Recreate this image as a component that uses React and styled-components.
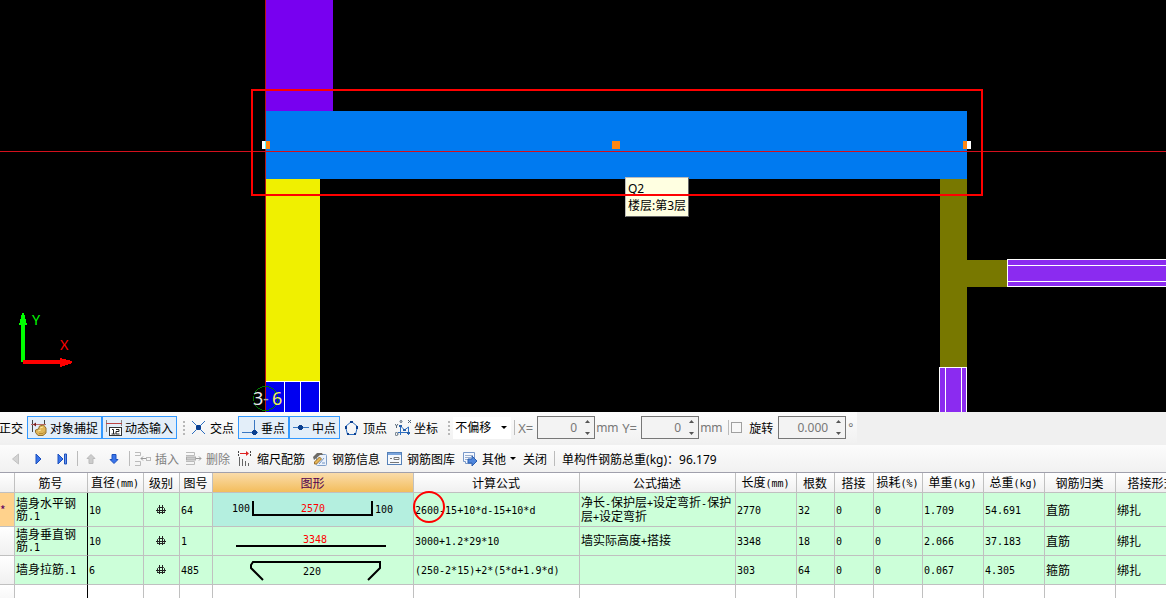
import { useState } from "react";
import styled, { createGlobalStyle } from "styled-components";

const columns = [
    { name: "", width: 15 },
    { name: "筋号", width: 73 },
    { name: "直径(mm)", width: 56 },
    { name: "级别", width: 36 },
    { name: "图号", width: 33 },
    { name: "图形", width: 201, active: true },
    { name: "计算公式", width: 166 },
    { name: "公式描述", width: 156 },
    { name: "长度(mm)", width: 61 },
    { name: "根数", width: 38 },
    { name: "搭接", width: 39 },
    { name: "损耗(%)", width: 49 },
    { name: "单重(kg)", width: 61 },
    { name: "总重(kg)", width: 61 },
    { name: "钢筋归类", width: 71 },
    { name: "搭接形式", width: 73 },
];

const bars = [
    {
        name: "墙身水平钢筋.1", diameter: "10", code: "64", shape: "u",
        formula: "2600-15+10*d-15+10*d", description: "净长-保护层+设定弯折-保护层+设定弯折",
        values: ["2770", "32", "0", "0", "1.709", "54.691", "直筋", "绑扎"],
    },
    {
        name: "墙身垂直钢筋.1", diameter: "10", code: "1", shape: "line",
        formula: "3000+1.2*29*10", description: "墙实际高度+搭接",
        values: ["3348", "18", "0", "0", "2.066", "37.183", "直筋", "绑扎"],
    },
    {
        name: "墙身拉筋.1", diameter: "6", code: "485", shape: "tie",
        formula: "(250-2*15)+2*(5*d+1.9*d)", description: "",
        values: ["303", "64", "0", "0", "0.067", "4.305", "箍筋", "绑扎"],
    },
];

// latin runs are set in a half-width font next to the full-width characters
function Mixed({ text }) {
    return text.split(/([\x21-\x7e]+)/).filter(Boolean).map((part, i) => (
        /^[\x21-\x7e]/.test(part) ? <Half key={i}>{part}</Half> : part
    ));
}

function Icon({ size = 16, children }) {
    return (
        <svg width={size} height={size} viewBox={`0 0 ${size} ${size}`} fill="none" aria-hidden="true">
            {children}
        </svg>
    );
}

function SnapIcon() {
    return (
        <Icon>
            <path d="M1.500 0v12M13.500 0v5" stroke="#444" />
            <path d="M0 4.500h15" stroke="#b86a6a" />
            <path d="M5 2.500v4L2 4.500z" fill="#7d2020" />
            <path d="M4.500 10l3-1 1-3 4-1 2.500 3v5l-3 2.500H7l-2.500-3z" fill="#dfb75a" stroke="#94702e" />
            <path d="M7 11l3-1M9 8l3-1" stroke="#fbe7a6" />
            <path d="M8 13.500h4l2-2" stroke="#b78b36" />
        </Icon>
    );
}

function DynamicIcon() {
    return (
        <Icon>
            <path d="M.5 0v12M15.500 0v6" stroke="#888" />
            <path d="M0 3.500h16" stroke="#b44" />
            <rect x="3.500" y="7.500" width="12" height="8" fill="#fff" stroke="#333" />
            <path d="M6 9.500h1.500V14M5.500 14h4M10 9.500h3v2h-3V14h3.500" stroke="#222" />
        </Icon>
    );
}

function CrossIcon() {
    return (
        <Icon>
            <path d="M1 1l13 13M14 1L1 14" stroke="#2d6ec0" />
            <path d="M6 5h3v1h1v3H9v1H6V9H5V6h1z" fill="#0b3f8f" />
        </Icon>
    );
}

function PerpendicularIcon() {
    return (
        <Icon>
            <path d="M12.500 0v12M0 12.500h16" stroke="#3a77c2" />
            <path d="M11 10h3v1h1v3h-1v1h-3v-1h-1v-3h1z" fill="#0b3f8f" />
        </Icon>
    );
}

function MiddleIcon() {
    return (
        <Icon>
            <path d="M0 7.500h16" stroke="#3a77c2" />
            <path d="M6 5h3v1h1v3H9v1H6V9H5V6h1z" fill="#0b3f8f" />
        </Icon>
    );
}

function VertexIcon() {
    return (
        <Icon>
            <path d="M7.500 1.500l6 5-2 8h-8l-2-8z" stroke="#2d6ec0" />
            <path d="M6 1h3v2H6zM1 6h2v3H1zM12 6h2v3h-2zM3 13h2v2H3zM10 13h2v2h-2z" fill="#0b3f8f" />
        </Icon>
    );
}

function CoordIcon() {
    return (
        <Icon>
            <path d="M5.500 6v9M3 12.500h12M5.500 6l4 4 4-3v8" stroke="#2d6ec0" />
            <path d="M4 5h3v2H4zM8 9h3v2H8zM12 12h3v2h-3z" fill="#2860aa" />
            <path d="M0 4l1.500 2L3 4M1.500 6v2M13 0l3 3M16 0l-3 3" stroke="#567" />
            <circle cx="1.500" cy="14" r="1.500" stroke="#567" />
            <circle cx="6" cy="1.500" r="1" stroke="#567" />
        </Icon>
    );
}

function PrevIcon() {
    return <Icon size={12}><path d="M8.500 1v10L2.500 6z" fill="#d3d3d3" stroke="#c2c2c2" /></Icon>;
}

function NextIcon() {
    return <Icon size={12}><path d="M3 1v10l5-5z" fill="#3974ea" stroke="#1c50bd" /></Icon>;
}

function LastIcon() {
    return (
        <Icon size={12}>
            <path d="M2 1v10l5-5z" fill="#3974ea" stroke="#1c50bd" />
            <path d="M8.500 1h2v10h-2z" fill="#6592ea" stroke="#1c50bd" />
        </Icon>
    );
}

function UpIcon() {
    return <Icon size={12}><path d="M6 1.500l4 4H8v5H4v-5H2z" fill="#ccc" stroke="#bbb" /></Icon>;
}

function DownIcon() {
    return <Icon size={12}><path d="M6 10.500l4-4H8v-5H4v5H2z" fill="#3974ea" stroke="#1c50bd" /></Icon>;
}

function InsertIcon() {
    return (
        <Icon>
            <path d="M0 1.500h5.500v3H0M0 10.500h5.500v4H0" stroke="#bbb" />
            <path d="M6 7.500h5M8 5.500l-2 2 2 2" stroke="#999" />
            <rect x="11.500" y="6.500" width="4" height="3" stroke="#bbb" />
        </Icon>
    );
}

function DeleteIcon() {
    return (
        <Icon>
            <path d="M0 1.500h8.500v3H0M0 10.500h8.500v3H0" stroke="#bbb" />
            <rect x=".5" y="6" width="9" height="3" fill="#ccc" stroke="#aaa" />
            <path d="M10 7.500h5M13 5.500l2 2-2 2" stroke="#999" />
        </Icon>
    );
}

function ScaleIcon() {
    return (
        <Icon>
            <path d="M3 2.500h7" stroke="#d22" />
            <path d="M9 0l3 2.500L9 5z" fill="#d22" />
            <path d="M1.500 0v5M13.500 0v5" stroke="#444" strokeDasharray="2 1" />
            <path d="M2.500 6v9M5.500 8v7M8.500 10v5M11.500 12v3" stroke="#666" />
        </Icon>
    );
}

function InfoIcon() {
    return (
        <Icon>
            <rect x="4.500" y="3.500" width="10" height="11" rx="1" fill="#eaf1fb" stroke="#7f9fc8" />
            <path d="M7 13l5-6M10 12h3" stroke="#7193c2" />
            <path d="M1 6l4-4h5l1 2-3 0-6 5z" fill="#6e6b66" />
            <path d="M2.500 11l5-5 2 2-5 5h-2z" fill="#e7b656" stroke="#98702e" />
        </Icon>
    );
}

function LibraryIcon() {
    return (
        <Icon>
            <rect x=".5" y="1.500" width="14" height="12" fill="#f6f9fd" stroke="#5681b8" />
            <path d="M1 3h13" stroke="#7ba5dc" strokeWidth="2" />
            <path d="M3 7.500h2M7 6.500h5v2H7zM3 11.500h9" stroke="#777" />
        </Icon>
    );
}

function OtherIcon() {
    return (
        <Icon>
            <path d="M1.500 1.500h11v9l-3 2h-6v-2h-2z" fill="#f4f8ff" stroke="#7898c9" />
            <path d="M3 4.500h8M3 6.500h6M3 8.500h4" stroke="#9aafce" />
            <path d="M6 8h4V5l5 5-5 5v-3H6z" fill="#4f86dc" stroke="#2c5fae" />
        </Icon>
    );
}

function GradeIcon() {
    return (
        <Icon size={10}>
            <path d="M2.500 2.500h5l1 1v3l-1 1h-5l-1-1v-3zM1 7.500h8M3.500 0v9M6.500 0v9M0 5.500h10" stroke="#222" />
        </Icon>
    );
}

function Shape({ kind }) {
    if (kind === "u") {
        return (
            <Drawing height="33">
                <path d="M40 8v14h119V8" />
                <text x="19" y="19">100</text>
                <text x="88" y="19" className="red">2570</text>
                <text x="162" y="20">100</text>
            </Drawing>
        );
    }
    if (kind === "line") {
        return (
            <Drawing height="28">
                <path d="M23 19h150" />
                <text x="90" y="16" className="red">3348</text>
            </Drawing>
        );
    }
    return (
        <Drawing height="28">
            <path d="M50 24L38 12V9l2-3h127v6l-12 12" />
            <text x="90" y="19">220</text>
        </Drawing>
    );
}

function Model() {
    return (
        <Scene>
            <svg width="100%" height="412" shapeRendering="crispEdges">
                <rect x="265" y="0" width="68" height="111" fill="#7800f0" />
                <rect x="265" y="111" width="702" height="68" fill="#007af0" />
                <rect x="265" y="179" width="55" height="202" fill="#f0f000" />
                <rect x="940" y="179" width="27" height="188" fill="#787800" />
                <rect x="967" y="260" width="40" height="27" fill="#787800" />
                <rect x="1007" y="259" width="100%" height="28" fill="#8b2bf0" />
                <path d="M1007.500 259v28M1007 259.500h2000M1007 265.500h2000M1007 281.500h2000M1007 286.500h2000" stroke="#fff" />
                <rect x="939" y="367" width="28" height="45" fill="#8b2bf0" />
                <path d="M939.500 412v-44.500h27V412M945.500 367v45M961.500 367v45" stroke="#fff" fill="none" />
                <rect x="265" y="381" width="55" height="31" fill="#0000f0" />
                <path d="M265 381.500h54.500V412M284.500 381v31M300.500 381v31" stroke="#fff" fill="none" />
                <path d="M265.500 0v412" stroke="#b81414" />
                <line x1="0" x2="100%" y1="151.500" y2="151.500" stroke="#d4101c" />
                <path d="M262 141h3v8h-3zM967 141h4v8h-4z" fill="#fff" />
                <path d="M265 141h1v8h-1z" fill="#5ff" />
                <path d="M266 141h4v8h-4zM612 141h8v8h-8zM963 141h4v8h-4z" fill="#ff8714" />
                <path d="M21 362v-37h-2l3-12h2l3 12h-2v37z" fill="#0f0" />
                <path d="M23 360h37v-2l12 3v2l-12 4v-3H23z" fill="#f00" />
                <circle cx="265.500" cy="398.500" r="12" stroke="#007a00" fill="none" />
                <AxisText x="32" y="325" fill="#0f0">Y</AxisText>
                <AxisText x="60" y="350" fill="#f00">X</AxisText>
                <GridText x="253" y="405" fill="#e8e8e8">3</GridText>
                <GridText x="263" y="405" fill="#b8b890">-</GridText>
                <GridText x="272" y="405" fill="#f0f060">6</GridText>
            </svg>
            <Tooltip>
                <p>Q2</p>
                <p>楼层:第3层</p>
            </Tooltip>
            <Selection />
        </Scene>
    );
}

function NumberField({ id, value, wide, label }) {
    const [number, setNumber] = useState(value);
    return (
        <Field $wide={wide}>
            <input id={id} aria-label={label} value={number} onChange={(e) => setNumber(e.target.value)} />
            <Spinner>
                <button aria-label="增加"><svg width="5" height="3"><path d="M0 3l2.500-3L5 3z" fill="#555" /></svg></button>
                <button aria-label="减少"><svg width="5" height="3"><path d="M0 0h5L2.500 3z" fill="#555" /></svg></button>
            </Spinner>
        </Field>
    );
}

function SnapBar() {
    return (
        <SnapRow>
            <SnapTools>
                <TextOnly>正交</TextOnly>
                <Tool $on><SnapIcon />对象捕捉</Tool>
                <Tool $on><DynamicIcon />动态输入</Tool>
                <Grip />
                <Tool><CrossIcon />交点</Tool>
                <Tool $on><PerpendicularIcon />垂点</Tool>
                <Tool $on><MiddleIcon />中点</Tool>
                <Tool><VertexIcon />顶点</Tool>
                <Tool><CoordIcon />坐标</Tool>
                <Grip />
                <SelectBox>
                    <select aria-label="偏移方式" defaultValue="不偏移">
                        <option>不偏移</option>
                    </select>
                    <svg width="6" height="3"><path d="M0 0h6L3 3z" fill="#000" /></svg>
                </SelectBox>
                <Separator />
                <FieldLabel htmlFor="offset-x">X=</FieldLabel>
                <NumberField id="offset-x" value="0" />
                <Unit>mm</Unit>
                <FieldLabel htmlFor="offset-y">Y=</FieldLabel>
                <NumberField id="offset-y" value="0" />
                <Unit>mm</Unit>
                <Separator />
                <Rotate><input type="checkbox" />旋转</Rotate>
                <NumberField label="旋转角度" value="0.000" wide />
                <Degree>°</Degree>
            </SnapTools>
        </SnapRow>
    );
}

function BarTools() {
    return (
        <EditRow>
            <NavButton aria-label="上一个"><PrevIcon /></NavButton>
            <NavButton aria-label="下一个"><NextIcon /></NavButton>
            <NavButton aria-label="最后"><LastIcon /></NavButton>
            <Separator />
            <NavButton aria-label="上移"><UpIcon /></NavButton>
            <NavButton aria-label="下移"><DownIcon /></NavButton>
            <Separator />
            <EditButton $off><InsertIcon />插入</EditButton>
            <EditButton $off><DeleteIcon />删除</EditButton>
            <EditButton><ScaleIcon />缩尺配筋</EditButton>
            <EditButton><InfoIcon />钢筋信息</EditButton>
            <EditButton><LibraryIcon />钢筋图库</EditButton>
            <EditButton>
                <OtherIcon />其他
                <svg width="6" height="3"><path d="M0 0h6L3 3z" fill="#000" /></svg>
            </EditButton>
            <EditButton>关闭</EditButton>
            <Separator />
            <Total>单构件钢筋总重(kg)：96.179</Total>
        </EditRow>
    );
}

function BarTable() {
    return (
        <TableArea>
            <Table>
                <colgroup>
                    {columns.map((column, i) => <Col key={i} $width={column.width} />)}
                </colgroup>
                <thead>
                    <tr>
                        {columns.map((column, i) => (
                            <Head key={i} $active={column.active}><Mixed text={column.name} /></Head>
                        ))}
                    </tr>
                </thead>
                <tbody>
                    {bars.map((bar, i) => (
                        <Row key={bar.name} $tall={i === 0}>
                            <RowHead $active={i === 0}>{i === 0 ? "*" : ""}</RowHead>
                            <Cell $frozen><Mixed text={bar.name} /></Cell>
                            <Cell><Mixed text={bar.diameter} /></Cell>
                            <GradeCell><GradeIcon /></GradeCell>
                            <Cell><Mixed text={bar.code} /></Cell>
                            <ShapeCell $active={i === 0}><Shape kind={bar.shape} /></ShapeCell>
                            <Cell><Mixed text={bar.formula} />{i === 0 && <Mark />}</Cell>
                            <Cell><Mixed text={bar.description} /></Cell>
                            {bar.values.map((value, j) => <Cell key={j}><Mixed text={value} /></Cell>)}
                        </Row>
                    ))}
                    <Row>
                        <RowHead />
                        {columns.slice(1).map((column, i) => <Cell key={i} $empty $frozen={i === 0} />)}
                    </Row>
                </tbody>
            </Table>
        </TableArea>
    );
}

export default function App() {
    return (
        <Page>
            <GlobalStyle />
            <Model />
            <SnapBar />
            <BarTools />
            <BarTable />
        </Page>
    );
}

const GlobalStyle = createGlobalStyle`
    * {
        box-sizing: border-box;
    }

    body {
        margin: 0;
        overflow: hidden;
    }

    body, button, input, select {
        font-family: "Noto Sans", "Noto Sans CJK SC", sans-serif;
        font-size: 12px;
    }

    button {
        border: 0;
        padding: 0;
        background: none;
        color: inherit;
    }

    p {
        margin: 0;
    }

    svg {
        flex-shrink: 0;
    }
`;

const Page = styled.div`
    display: flex;
    flex-direction: column;
    height: 100vh;
    overflow: hidden;
    background-color: #fff;
    color: #000;
`;

const Scene = styled.div`
    position: relative;
    flex-shrink: 0;
    background-color: #000;
    overflow: hidden;

    > svg {
        display: block;
    }
`;

const AxisText = styled.text`
    font-family: Lato, sans-serif;
    font-size: 13px;
`;

const GridText = styled.text`
    font-family: "Noto Sans", sans-serif;
    font-size: 18px;
`;

const Tooltip = styled.div`
    position: absolute;
    left: 625px;
    top: 177px;
    padding: 2px;
    border: 1px solid #bbb;
    border-right-color: #666;
    border-bottom-color: #666;
    background-color: #ffffe1;
    line-height: 17px;
    white-space: nowrap;
`;

const Selection = styled.div`
    position: absolute;
    left: 251px;
    top: 89px;
    width: 732px;
    height: 107px;
    border: 2px solid #f00;
`;

const SnapRow = styled.div`
    display: flex;
    flex-shrink: 0;
    height: 33px;
    background-color: #f0f0f0;
`;

const SnapTools = styled.div`
    display: flex;
    align-items: center;
    height: 31px;
    padding-right: 2px;
    background: linear-gradient(#fcfcfc, #f1f1f1);
    white-space: nowrap;
`;

const Tool = styled.button`
    display: flex;
    align-items: center;
    gap: 3px;
    height: 23px;
    padding: 0 3px;
    border: 1px solid ${({ $on }) => $on ? "#3399ff" : "transparent"};
    background-color: ${({ $on }) => $on ? "#e3eef9" : "transparent"};
    white-space: nowrap;
`;

const TextOnly = styled(Tool)`
    margin-left: -5px;
`;

const Grip = styled.span`
    width: 2px;
    height: 14px;
    margin: 0 2px 0 6px;
    background: repeating-linear-gradient(#b8b8b8 0 2px, transparent 2px 4px);
`;

const SelectBox = styled.div`
    display: flex;
    align-items: center;
    width: 58px;
    height: 22px;
    margin-left: 1px;
    padding-right: 4px;
    background-color: #fff;

    select {
        flex: 1;
        min-width: 0;
        appearance: none;
        border: 0;
        padding: 0 2px;
        background: none;
        color: #000;
    }
`;

const Separator = styled.span`
    width: 1px;
    height: 15px;
    margin: 0 2px 0 3px;
    background-color: #bbb;
`;

const FieldLabel = styled.label`
    width: 20px;
    padding-left: 1px;
    color: #7a7a7a;
    font-size: 13px;
`;

const Field = styled.div`
    display: flex;
    width: ${({ $wide }) => $wide ? "68px" : "58px"};
    height: 23px;
    border: 1px solid #777;
    background-color: #f3f3f3;

    input {
        flex: 1;
        min-width: 0;
        border: 0;
        padding: 0 8px 0 0;
        background: none;
        color: #777;
        text-align: right;
    }
`;

const Spinner = styled.div`
    display: flex;
    flex-direction: column;
    justify-content: space-between;
    width: 9px;
    padding: 3px 0;

    button {
        display: flex;
    }
`;

const Unit = styled.span`
    width: 26px;
    padding-left: 1px;
    color: #777;
`;

const Degree = styled.span`
    padding: 0 2px;
    color: #777;
`;

const Rotate = styled.label`
    display: flex;
    align-items: center;
    gap: 7px;
    padding-right: 5px;

    input {
        appearance: none;
        width: 11px;
        height: 11px;
        margin: 0;
        border: 1px solid #a0a0a0;
        background-color: #f8f8f8;
    }
`;

const EditRow = styled.div`
    display: flex;
    flex-shrink: 0;
    align-items: center;
    height: 27px;
    padding-left: 5px;
    background: linear-gradient(#fcfcfc, #f1f1f1);
    white-space: nowrap;
`;

const NavButton = styled.button`
    display: flex;
    align-items: center;
    justify-content: center;
    width: 23px;
    height: 23px;
    padding-right: 2px;
`;

const EditButton = styled.button`
    display: flex;
    align-items: center;
    gap: 4px;
    margin-right: 1px;
    padding: 0 3px;
    color: ${({ $off }) => $off ? "#808080" : "#000"};
`;

const Total = styled.span`
    padding-left: 5px;
`;

const TableArea = styled.div`
    flex: 1;
    min-height: 0;
    overflow: hidden;
    border-top: 1px solid #a0a0ac;
`;

const Table = styled.table`
    table-layout: fixed;
    width: 1188px;
    border-collapse: separate;
    border-spacing: 0;
    font-family: "Noto Sans CJK SC", sans-serif;
    line-height: 12px;
`;

const Col = styled.col`
    width: ${({ $width }) => $width}px;
`;

const Head = styled.th`
    height: 20px;
    padding: 0 1px 0 0;
    border-right: 1px solid #c0c0c0;
    border-bottom: 1px solid #c0c0c0;
    background: ${({ $active }) => $active ? "linear-gradient(#fadcaa, #f3bd5c)" : "linear-gradient(#fff, #f0f0f0)"};
    color: ${({ $active }) => $active ? "#500050" : "#000"};
    font-weight: 400;
    white-space: nowrap;
`;

const Row = styled.tr`
    height: ${({ $tall }) => $tall ? "34px" : "29px"};
`;

const RowHead = styled.th`
    padding: 0;
    border-right: 1px solid #c0c0c0;
    border-bottom: 1px solid #c0c0c0;
    background: ${({ $active }) => $active ? "#ffd28c" : "linear-gradient(#fff, #f0f0f0)"};
    color: #600060;
    font-weight: 400;
    text-align: left;
`;

const Cell = styled.td`
    position: relative;
    padding: 0 2px 0 1px;
    border-right: 1px solid ${({ $frozen }) => $frozen ? "#000" : "#c0c0c0"};
    border-bottom: 1px solid #c0c0c0;
    background-color: ${({ $empty }) => $empty ? "#fff" : "#ccffd9"};
`;

const GradeCell = styled(Cell)`
    svg {
        display: block;
        margin: 0 auto;
    }
`;

const ShapeCell = styled(Cell)`
    padding: 0;
    background-color: ${({ $active }) => $active ? "#b4efdf" : "#ccffd9"};
`;

const Half = styled.span`
    font-family: "DejaVu Sans Mono", monospace;
    font-size: 10px;
`;

const Drawing = styled.svg`
    display: block;
    width: 200px;

    path {
        fill: none;
        stroke: #000;
        stroke-width: 2px;
    }

    text {
        font-family: "DejaVu Sans Mono", monospace;
        font-size: 10px;
    }

    .red {
        fill: #f00;
    }
`;

const Mark = styled.span`
    position: absolute;
    left: -1px;
    top: -2px;
    width: 32px;
    height: 32px;
    border: 2px solid #f00;
    border-radius: 50%;
`;
